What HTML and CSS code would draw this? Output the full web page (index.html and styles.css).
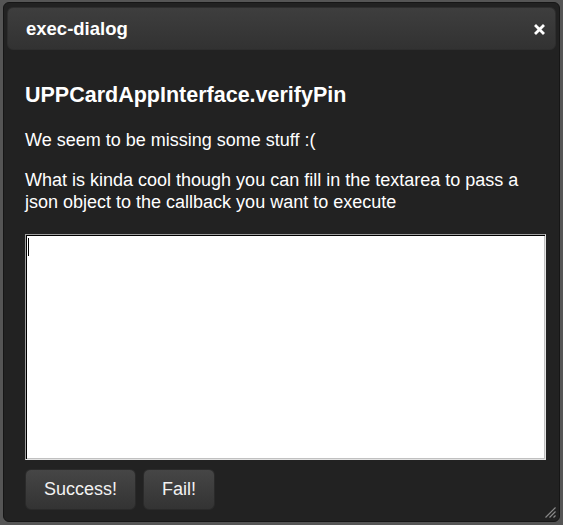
FILE: index.html
```html
<!DOCTYPE html>
<html>
<head>
<meta charset="utf-8">
<link rel="stylesheet" href="styles.css">
</head>
<body>
<div class="dialog">
  <div class="titlebar">
    <span class="title">exec-dialog</span>
    <svg class="close" width="11" height="11" viewBox="0 0 11 11">
      <path d="M2 2 L9 9 M9 2 L2 9" stroke="#fff" stroke-width="2.8" stroke-linecap="square"/>
    </svg>
  </div>
  <div class="content">
    <h3 class="heading">UPPCardAppInterface.verifyPin</h3>
    <p class="text text-first">We seem to be missing some stuff :(</p>
    <p class="text">What is kinda cool though you can fill in the textarea to pass a json object to the callback you want to execute</p>
    <div class="textarea"><span class="caret"></span></div>
    <div class="buttons">
      <button class="btn">Success!</button>
      <button class="btn">Fail!</button>
    </div>
  </div>
  <svg class="grip" width="12" height="12" viewBox="0 0 12 12">
    <path d="M11.5 1.5 L1.5 11.5 M11.5 5.5 L5.5 11.5 M11.5 9.5 L9.5 11.5" stroke="#8a8a8a" stroke-width="1.2"/>
  </svg>
</div>
</body>
</html>
```
FILE: styles.css
```css
html, body {
  margin: 0;
  padding: 0;
}
body {
  background: #555555;
  padding: 2px 3px 3px 3px;
  font-family: "Liberation Sans", Arial, sans-serif;
  color: #ffffff;
}
.dialog {
  position: relative;
  box-sizing: border-box;
  width: 557px;
  height: 520px;
  background: #222222;
  border: 1px solid #161616;
  border-radius: 6px;
  padding: 4px 3px 3px 3px;
}
.titlebar {
  box-sizing: border-box;
  height: 43px;
  border: 1px solid #2e2e2e;
  border-radius: 6px;
  background: linear-gradient(#3e3e3e, #323232);
  display: flex;
  align-items: center;
  justify-content: space-between;
  padding: 0 10px 0 18px;
}
.title {
  font-weight: bold;
  font-size: 18.5px;
}
.close {
  display: block;
  margin-top: 2px;
}
.content {
  padding: 0 10px 0 18px;
}
.heading {
  margin: 32px 0 0 0;
  font-size: 21.5px;
  font-weight: bold;
  line-height: 26px;
}
.text {
  margin: 18px 0 0 0;
  font-size: 18px;
  line-height: 22px;
}
.text-first {
  margin-top: 21px;
}
.textarea {
  box-sizing: border-box;
  margin-top: 21px;
  height: 226px;
  background: #ffffff;
  border: 1px solid;
  border-color: #a0a0a0 #e3e3e3 #e3e3e3 #a0a0a0;
  box-shadow: inset 1px 1px 0 #000000, inset -1px -1px 0 #c0c0c0;
  padding: 3px 2px;
}
.caret {
  display: block;
  width: 1px;
  height: 18px;
  background: #000000;
}
.buttons {
  display: flex;
  gap: 7px;
  margin-top: 9px;
}
.btn {
  box-sizing: border-box;
  height: 41px;
  border: 1px solid #2a2a2a;
  border-radius: 6px;
  background: linear-gradient(#464646, #333333);
  color: #f2f2f2;
  font-family: "Liberation Sans", Arial, sans-serif;
  font-size: 18px;
  padding: 0 18px;
}
.grip {
  position: absolute;
  right: 3px;
  bottom: 3px;
}
```
